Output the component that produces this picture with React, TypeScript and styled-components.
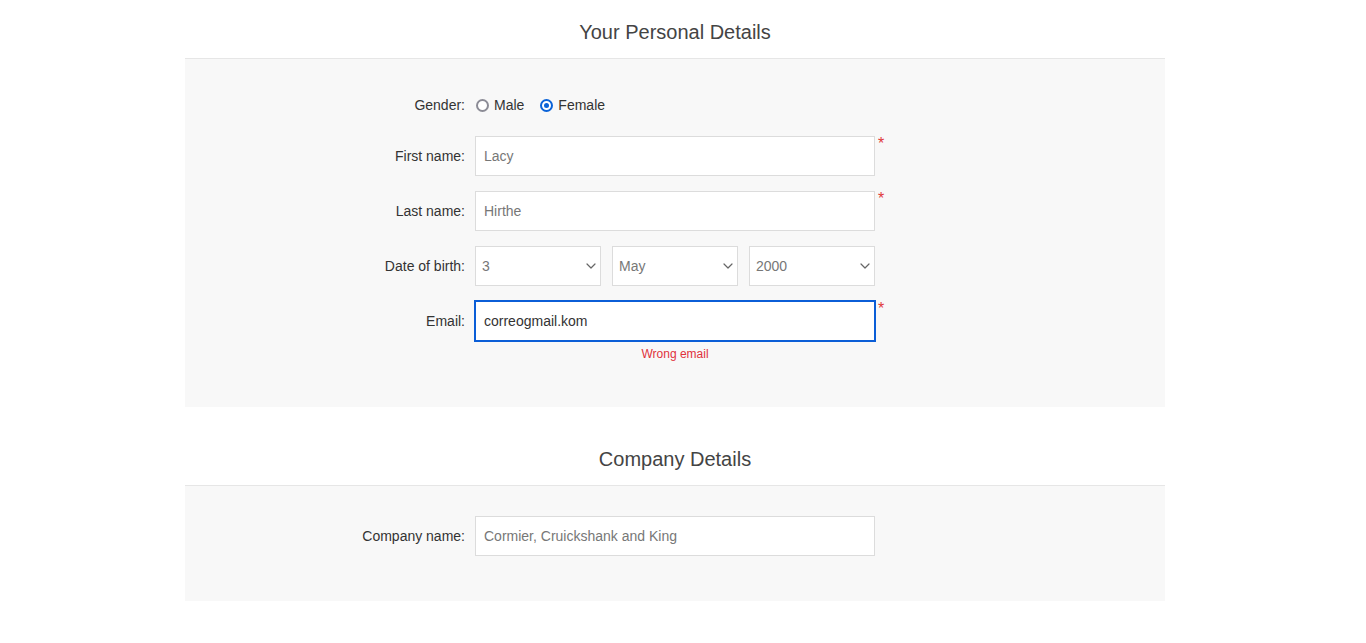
import styled, { createGlobalStyle } from "styled-components";
import { ChevronDown } from "lucide-react";

const GlobalStyle = createGlobalStyle`
	body {
		margin: 0;
		background: #fff;
		font-family: "Liberation Sans", Arial, sans-serif;
		color: #333;
	}
`;

const days = Array.from({ length: 31 }, (_, i) => String(i + 1));
const months = ["Jan", "Feb", "Mar", "Apr", "May", "Jun", "Jul", "Aug", "Sep", "Oct", "Nov", "Dec"];
const years = Array.from({ length: 60 }, (_, i) => String(1960 + i));

function DateSelect({ value, options }: { value: string; options: string[] }) {
	return (
		<SelectWrap>
			<Select defaultValue={value}>
				{options.map((o) => (
					<option key={o} value={o}>
						{o}
					</option>
				))}
			</Select>
			<Chevron>
				<ChevronDown size={16} strokeWidth={1.8} />
			</Chevron>
		</SelectWrap>
	);
}

export default function App() {
	return (
		<Page>
			<GlobalStyle />
			<Container>
				<Section>
					<SectionTitle>Your Personal Details</SectionTitle>
					<Panel>
						<Row $compact>
							<Label $compact>Gender:</Label>
							<RadioGroup>
								<RadioLabel>
									<Radio type="radio" name="gender" value="male" />
									Male
								</RadioLabel>
								<RadioLabel>
									<Radio type="radio" name="gender" value="female" defaultChecked />
									Female
								</RadioLabel>
							</RadioGroup>
						</Row>
						<Row>
							<Label>First name:</Label>
							<Input defaultValue="Lacy" />
							<Required>*</Required>
						</Row>
						<Row>
							<Label>Last name:</Label>
							<Input defaultValue="Hirthe" />
							<Required>*</Required>
						</Row>
						<Row>
							<Label>Date of birth:</Label>
							<DateGroup>
								<DateSelect value="3" options={days} />
								<DateSelect value="May" options={months} />
								<DateSelect value="2000" options={years} />
							</DateGroup>
						</Row>
						<Row $last>
							<Label>Email:</Label>
							<Field>
								<Input defaultValue="correogmail.kom" $invalid $dark />
								<ErrorText>Wrong email</ErrorText>
							</Field>
							<Required>*</Required>
						</Row>
					</Panel>
				</Section>
				<Section $spaced>
					<SectionTitle>Company Details</SectionTitle>
					<Panel>
						<Row $last>
							<Label>Company name:</Label>
							<Input defaultValue="Cormier, Cruickshank and King" />
						</Row>
					</Panel>
				</Section>
			</Container>
		</Page>
	);
}

const Page = styled.div`
	display: flex;
	justify-content: center;
	padding-right: 16px;
`;

const Container = styled.div`
	width: 980px;
`;

const Section = styled.section<{ $spaced?: boolean }>`
	margin-top: ${({ $spaced }) => ($spaced ? "20px" : "0")};
`;

const SectionTitle = styled.h2`
	margin: 0;
	padding: 20px 0 14px;
	font-size: 20px;
	line-height: 24px;
	font-weight: normal;
	text-align: center;
	color: #444;
	border-bottom: 1px solid #e6e6e6;
`;

const Panel = styled.div`
	background: #f8f8f8;
	padding: 30px 0 45px;
`;

const Row = styled.div<{ $compact?: boolean; $last?: boolean }>`
	display: grid;
	grid-template-columns: 280px 400px auto;
	column-gap: 10px;
	align-items: ${({ $compact }) => ($compact ? "center" : "start")};
	height: ${({ $compact }) => ($compact ? "32px" : "auto")};
	margin-bottom: ${({ $last }) => ($last ? "0" : "15px")};
`;

const Label = styled.label<{ $compact?: boolean }>`
	text-align: right;
	font-size: 14px;
	line-height: ${({ $compact }) => ($compact ? "32px" : "40px")};
	color: #333;
`;

const RadioGroup = styled.div`
	display: flex;
	align-items: center;
	gap: 15px;
`;

const RadioLabel = styled.label`
	display: flex;
	align-items: center;
	gap: 5px;
	font-size: 14px;
	color: #333;
`;

const Radio = styled.input`
	appearance: none;
	box-sizing: border-box;
	display: grid;
	place-items: center;
	margin: 0 0 0 1px;
	width: 13px;
	height: 13px;
	border: 2px solid #8c8c96;
	border-radius: 50%;
	background: #fff;

	&:checked {
		border-color: #0b63d8;
	}
	&:checked::after {
		content: "";
		width: 5px;
		height: 5px;
		border-radius: 50%;
		background: #0b63d8;
	}
`;

const Input = styled.input<{ $invalid?: boolean; $dark?: boolean }>`
	box-sizing: border-box;
	width: 400px;
	height: 40px;
	margin: 0;
	padding: 0 8px;
	font-family: "Liberation Sans", Arial, sans-serif;
	font-size: 14px;
	color: ${({ $dark }) => ($dark ? "#333" : "#777")};
	background: #fff;
	border: 1px solid ${({ $invalid }) => ($invalid ? "#0b5ed7" : "#dcdcdc")};
	box-shadow: ${({ $invalid }) => ($invalid ? "0 0 0 1px #0b5ed7" : "none")};
	border-radius: 0;
	outline: none;
`;

const Required = styled.span`
	color: #e03a3a;
	font-size: 16px;
	line-height: 16px;
	margin-left: -7px;
`;

const Field = styled.div`
	display: flex;
	flex-direction: column;
	align-items: center;
`;

const ErrorText = styled.span`
	margin-top: 5px;
	font-size: 12px;
	line-height: 16px;
	color: #e0323c;
`;

const DateGroup = styled.div`
	display: grid;
	grid-template-columns: repeat(3, 126px);
	column-gap: 11px;
`;

const SelectWrap = styled.div`
	position: relative;
`;

const Select = styled.select`
	box-sizing: border-box;
	appearance: none;
	width: 126px;
	height: 40px;
	margin: 0;
	padding: 0 24px 0 6px;
	font-family: "Liberation Sans", Arial, sans-serif;
	font-size: 14px;
	color: #777;
	background: #fff;
	border: 1px solid #dcdcdc;
	border-radius: 0;
	outline: none;
`;

const Chevron = styled.span`
	position: absolute;
	right: 2px;
	top: 12px;
	display: flex;
	color: #666;
	pointer-events: none;
`;
